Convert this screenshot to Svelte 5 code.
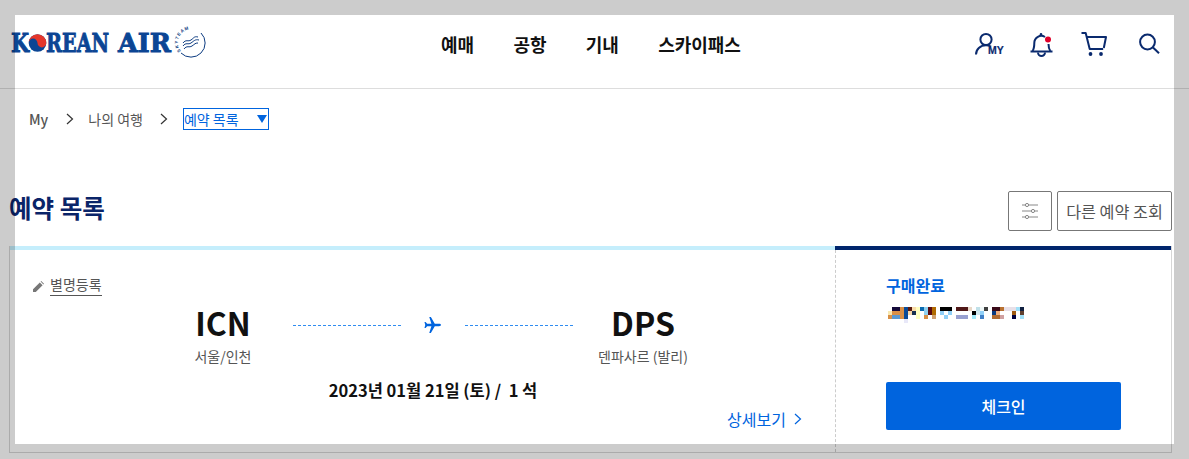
<script>
  const nav = ["예매", "공항", "기내", "스카이패스"];

  // pixelated booking name: [col, row, colour], cells are 4px
  const mosaic = [
    [1,0,"#140a3a"],[2,0,"#140a3a"],[3,0,"#d98f45"],[4,0,"#0a4a96"],[5,0,"#5a1a10"],[6,0,"#fadcaa"],[7,0,"#ffffc0"],[8,0,"#0a6ab0"],[9,0,"#90d0f0"],[10,0,"#5a0a10"],[11,0,"#b06a00"],
    [13,0,"#000"],[14,0,"#000"],[15,0,"#000"],[17,0,"#501818"],[18,0,"#501818"],[19,0,"#501818"],[20,0,"#e8d8c8"],[22,0,"#c0e0e8"],[23,0,"#f0f8f8"],[24,0,"#404040"],
    [26,0,"#3a0a18"],[27,0,"#3a0a18"],[28,0,"#b87030"],[29,0,"#e8e0e8"],[30,0,"#e8e0e8"],[31,0,"#e8e0e8"],[32,0,"#a0e0f8"],[33,0,"#102040"],
    [0,1,"#f8e8b0"],[1,1,"#d98f45"],[2,1,"#d98f45"],[3,1,"#d98f45"],[4,1,"#0a4a96"],[5,1,"#f8d8a8"],[6,1,"#183050"],[7,1,"#ffffc0"],[9,1,"#90d0f0"],[10,1,"#5a0a10"],[11,1,"#b06a00"],
    [13,1,"#90d0f8"],[15,1,"#90d0f8"],[21,1,"#000"],[22,1,"#d0e8f0"],[23,1,"#90d0f8"],[26,1,"#0a3a80"],[27,1,"#f0b080"],[31,1,"#a05a10"],[33,1,"#604030"],
    [0,2,"#d98f45"],[1,2,"#5a98d0"],[2,2,"#5a98d0"],[3,2,"#d98f45"],[4,2,"#0a4a96"],[7,2,"#ffffc0"],[9,2,"#d98f45"],[11,2,"#d0a070"],
    [14,2,"#90d0f8"],[17,2,"#98a0d0"],[18,2,"#98a0d0"],[19,2,"#98a0d0"],[21,2,"#a0e8f8"],[23,2,"#4080c8"],[26,2,"#b06a30"],[27,2,"#b06a30"],[28,2,"#d0a0a0"],[31,2,"#000040"],[33,2,"#a0e0f8"],
    [4,3,"#e8e8f8"],
  ];
</script>

<div class="page">
  <header class="header">
    <a class="logo" href="#top" aria-label="Korean Air">
      <svg width="196" height="32" viewBox="0 0 196 32">
        <g fill="#0b4594" stroke="#0b4594" stroke-width="0.9" font-family="DejaVu Serif" font-weight="700" font-size="26">
          <text transform="translate(0 24) scale(.8 1)">K</text>
          <text transform="translate(35 24) scale(.74 1)">REAN</text>
          <text transform="translate(107 24) scale(.98 1)">AIR</text>
        </g>
        <circle cx="26.500" cy="15" r="8.800" fill="#0b4594" />
        <path d="M17.700 15a8.800 8.800 0 0 1 17.600 0a4.400 4.400 0 0 1-8.800 0a4.400 4.400 0 0 0-8.800 0z" fill="#e5362a" />
        <path d="M190 5a14 14 0 0 1-20 20" fill="none" stroke="#0b3a80" stroke-width="1" />
        <path id="sky-arc" d="M170 23a12 12 0 0 1 20-17" fill="none" />
        <text font-family="Liberation Sans" font-size="4.500" font-weight="700" fill="#0b3a80" letter-spacing="0.9"><textPath href="#sky-arc">SKYTEAM</textPath></text>
        <g fill="none" stroke="#0b3a80" stroke-width="1">
          <path d="M172 15c3-4 5-1 8-3s3-4 7-3" />
          <path d="M172 18c3-4 5-1 8-3s4-4 8-3" />
          <path d="M173 21c3-4 5-1 8-3s3-3 6-3" />
        </g>
      </svg>
    </a>
    <nav class="nav">
      {#each nav as item}
        <a href="#top">{item}</a>
      {/each}
    </nav>
    <div class="actions">
      <svg class="ic-my" width="28" height="24" viewBox="0 0 28 24" fill="none" stroke="#0a2a6e" stroke-width="2">
        <circle cx="12" cy="7.500" r="5.600" />
        <path d="M2 22.500c0-5 4.200-9.200 10-9.200c2 0 3.600.5 5 1.400" />
        <text x="14" y="22" font-family="Liberation Sans" font-size="10.500" font-weight="700" fill="#0a2a6e" stroke="#0a2a6e" stroke-width="0.2">MY</text>
      </svg>
      <svg class="ic-bell" width="23" height="25" viewBox="0 0 23 25" fill="none" stroke="#0a2a6e" stroke-width="2">
        <path d="M2.500 19c1.500-2 1.800-4.500 1.800-8a7 7 0 0 1 10.700-6" />
        <path d="M18.500 12c0 3 .5 5 1.800 7" />
        <path d="M0.500 19.500h22" />
        <path d="M8 20.500a3.500 3.500 0 0 0 7 0" />
        <circle cx="11" cy="2.400" r="1.300" fill="#0a2a6e" stroke="none" />
        <circle cx="18" cy="7.500" r="3" fill="#e0002a" stroke="none" />
      </svg>
      <svg class="ic-cart" width="27" height="25" viewBox="0 0 27 25" fill="none" stroke="#0a2a6e" stroke-width="2" stroke-linejoin="round">
        <path d="M0.500 1h4.200l4 16h13.500" />
        <path d="M5.500 5h19.500l-2.200 11" />
        <circle cx="9.500" cy="22" r="1.900" fill="#0a2a6e" stroke="none" />
        <circle cx="20" cy="22" r="1.900" fill="#0a2a6e" stroke="none" />
      </svg>
      <svg class="ic-search" width="21" height="20" viewBox="0 0 21 20" fill="none" stroke="#0a2a6e" stroke-width="2">
        <circle cx="8.500" cy="8" r="7.400" />
        <path d="M14 13.500l6 5.800" />
      </svg>
    </div>
  </header>

  <div class="crumbs">
    <span class="home">My</span>
    <svg class="chev" width="8" height="12" viewBox="0 0 8 12"><path d="M1 1l5.500 5L1 11" fill="none" stroke="#333" stroke-width="1.200" /></svg>
    <span>나의 여행</span>
    <svg class="chev" width="8" height="12" viewBox="0 0 8 12"><path d="M1 1l5.500 5L1 11" fill="none" stroke="#333" stroke-width="1.200" /></svg>
    <div class="select">
      <span>예약 목록</span>
      <i class="caret"></i>
    </div>
  </div>

  <div class="title-row">
    <h1>예약 목록</h1>
    <button class="btn-filter" aria-label="필터">
      <svg width="16" height="16" viewBox="0 0 16 16" fill="none" stroke="#888" stroke-width="1">
        <path d="M0 2h16M0 8h16M0 14h16" />
        <circle cx="5" cy="2" r="1.600" fill="#fff" />
        <circle cx="11" cy="8" r="1.600" fill="#fff" />
        <circle cx="5" cy="14" r="1.600" fill="#fff" />
      </svg>
    </button>
    <button class="btn-other">다른 예약 조회</button>
  </div>

  <section class="card">
    <div class="main">
      <div class="alias">
        <svg width="11" height="11" viewBox="0 0 11 11"><path d="M0 11V8.200L6.800 1.400l2.800 2.800L2.800 11zM7.600.6l.6-.6L11 2.800l-.6.6z" fill="#777" /></svg>
        <span>별명등록</span>
      </div>
      <div class="route">
        <div class="port">
          <strong>ICN</strong>
          <span>서울/인천</span>
        </div>
        <div class="line"></div>
        <div class="plane">
          <svg width="18" height="16" viewBox="0 0 20 18"><path d="M19 9c0-.8-1-1.300-2.200-1.300H12L7.600 0H5.800l2.400 7.700H3.400L1.700 5.500H.4L1.300 9 .4 12.500h1.300l1.700-2.200h4.800L5.800 18h1.800L12 10.300h4.800C18 10.300 19 9.800 19 9z" fill="#0064de" /></svg>
        </div>
        <div class="line"></div>
        <div class="port">
          <strong>DPS</strong>
          <span>덴파사르 (발리)</span>
        </div>
      </div>
      <p class="date">2023년 01월 21일 (토) / &nbsp;1 석</p>
      <a class="more" href="#top">
        상세보기
        <svg width="8" height="12" viewBox="0 0 8 12"><path d="M1 1l5.500 5L1 11" fill="none" stroke="#0064de" stroke-width="1.200" /></svg>
      </a>
    </div>
    <aside class="side">
      <div class="status">구매완료</div>
      <svg class="mosaic" width="136" height="20" viewBox="0 0 136 20" shape-rendering="crispEdges">
        {#each mosaic as [c, r, color]}
          <rect x={c * 4} y={r * 4} width="4" height="4" fill={color} />
        {/each}
      </svg>
      <button class="checkin">체크인</button>
    </aside>
  </section>

  <div class="frame"></div>
</div>

<style>
  :global(body) {
    margin: 0;
    background: #fff;
    overflow: hidden;
  }

  .page {
    position: relative;
    height: 459px;
    overflow: hidden;
    font-family: "Noto Sans CJK KR", "Noto Sans", sans-serif;
    color: #333;
  }

  /* grey lightbox band lying over the page */
  .frame {
    position: absolute;
    inset: 0;
    border: 15px solid rgba(0, 0, 0, 0.2);
    pointer-events: none;
  }

  .header {
    display: flex;
    align-items: center;
    height: 88px;
    padding: 0 29px 0 11px;
    border-bottom: 1px solid #ddd;
  }

  .logo {
    display: block;
    width: 196px;
    height: 32px;
  }

  .logo svg {
    display: block;
    overflow: visible;
  }

  .nav {
    display: flex;
    gap: 39.250px;
    margin-left: 234px;
  }

  .nav a {
    font-size: 18px;
    font-weight: 700;
    line-height: 26px;
    color: #111;
    text-decoration: none;
  }

  .actions {
    display: flex;
    align-items: center;
    margin-left: auto;
  }

  .actions svg {
    display: block;
    overflow: visible;
  }

  .ic-bell {
    margin-left: 28px;
  }

  .ic-cart {
    margin-left: 28px;
  }

  .ic-search {
    margin-left: 31px;
  }

  .crumbs {
    display: flex;
    align-items: center;
    height: 22px;
    margin-top: 19px;
    padding-left: 29px;
    font-size: 14px;
    color: #555;
  }

  .crumbs span {
    line-height: 22px;
  }

  .home {
    font-weight: 500;
  }

  .chev {
    margin: 0 14.500px 0 17.500px;
  }

  .select {
    display: flex;
    align-items: center;
    justify-content: space-between;
    box-sizing: border-box;
    width: 86px;
    height: 22px;
    padding: 0 1px 0 0;
    border: 1px solid #0064de;
    font-size: 14px;
    color: #0064de;
  }

  .caret {
    width: 0;
    height: 0;
    border-left: 5px solid transparent;
    border-right: 5px solid transparent;
    border-top: 8px solid #0064de;
  }

  .title-row {
    display: flex;
    align-items: center;
    height: 40px;
    margin: 61px 17px 15px 9px;
  }

  h1 {
    margin: -7px auto 0 0;
    font-size: 24.500px;
    font-weight: 700;
    line-height: 36px;
    color: #0a2468;
  }

  .title-row button {
    height: 40px;
    box-sizing: border-box;
    background: #fff;
    border: 1px solid #777;
    border-radius: 2px;
    font-family: inherit;
  }

  .btn-filter {
    display: flex;
    align-items: center;
    justify-content: center;
    width: 44px;
    padding: 0;
  }

  .btn-other {
    width: 115px;
    margin-left: 5px;
    padding: 0;
    font-size: 16.200px;
    color: #555;
  }

  .card {
    display: flex;
    height: 207px;
    margin: 0 17px 0 9px;
    border: 1px solid #d6d6d6;
    border-top: 0;
    box-sizing: border-box;
  }

  .main {
    display: flex;
    flex-direction: column;
    box-sizing: border-box;
    width: 825px;
    padding: 26px 33px 0 23px;
    border-top: 4px solid #c5eefc;
  }

  .alias {
    display: flex;
    align-items: center;
    gap: 6px;
    font-size: 14px;
    color: #555;
    line-height: 17px;
  }

  .alias span {
    padding-bottom: 2px;
    border-bottom: 1px solid #555;
  }

  .route {
    display: flex;
    align-items: flex-start;
    margin: 4px 0 0 130px;
  }

  .port {
    display: flex;
    flex-direction: column;
    align-items: center;
    width: 120px;
  }

  .port strong {
    font-size: 32px;
    font-weight: 700;
    line-height: 44px;
    color: #111;
  }

  .port span {
    font-size: 14px;
    line-height: 20px;
    margin-top: 2px;
    color: #555;
    white-space: nowrap;
  }

  .line {
    flex: none;
    width: 108px;
    height: 1px;
    margin: 25px 10px 0;
    background-color: transparent;
    background-image: repeating-linear-gradient(90deg, #2f8cf0 0 3px, #fff 3px 5px);
  }

  .plane {
    display: flex;
    justify-content: center;
    width: 44px;
    margin-top: 17px;
  }

  .date {
    margin: 13px 0 0 130px;
    width: 540px;
    text-align: center;
    font-size: 16.500px;
    font-weight: 700;
    line-height: 22px;
    color: #111;
  }

  .more {
    display: flex;
    align-items: center;
    gap: 8px;
    align-self: flex-end;
    margin-top: 7px;
    font-size: 16px;
    line-height: 22px;
    color: #0064de;
    text-decoration: none;
  }

  .side {
    display: flex;
    flex-direction: column;
    flex: 1;
    box-sizing: border-box;
    padding: 24px 50px 0 51px;
    border-top: 4px solid #00256c;
    position: relative;
  }

  .side::before {
    content: "";
    position: absolute;
    left: 0;
    top: 0;
    bottom: 0;
    border-left: 1px dashed #ccc;
  }

  .status {
    font-size: 16px;
    font-weight: 700;
    line-height: 22px;
    color: #0064de;
  }

  .mosaic {
    display: block;
    margin: 11px 0 0 2px;
  }

  .checkin {
    height: 48px;
    margin-top: 55px;
    background: #0064de;
    border: 0;
    border-radius: 2px;
    font-family: inherit;
    font-size: 16px;
    font-weight: 500;
    color: #fff;
  }
</style>
